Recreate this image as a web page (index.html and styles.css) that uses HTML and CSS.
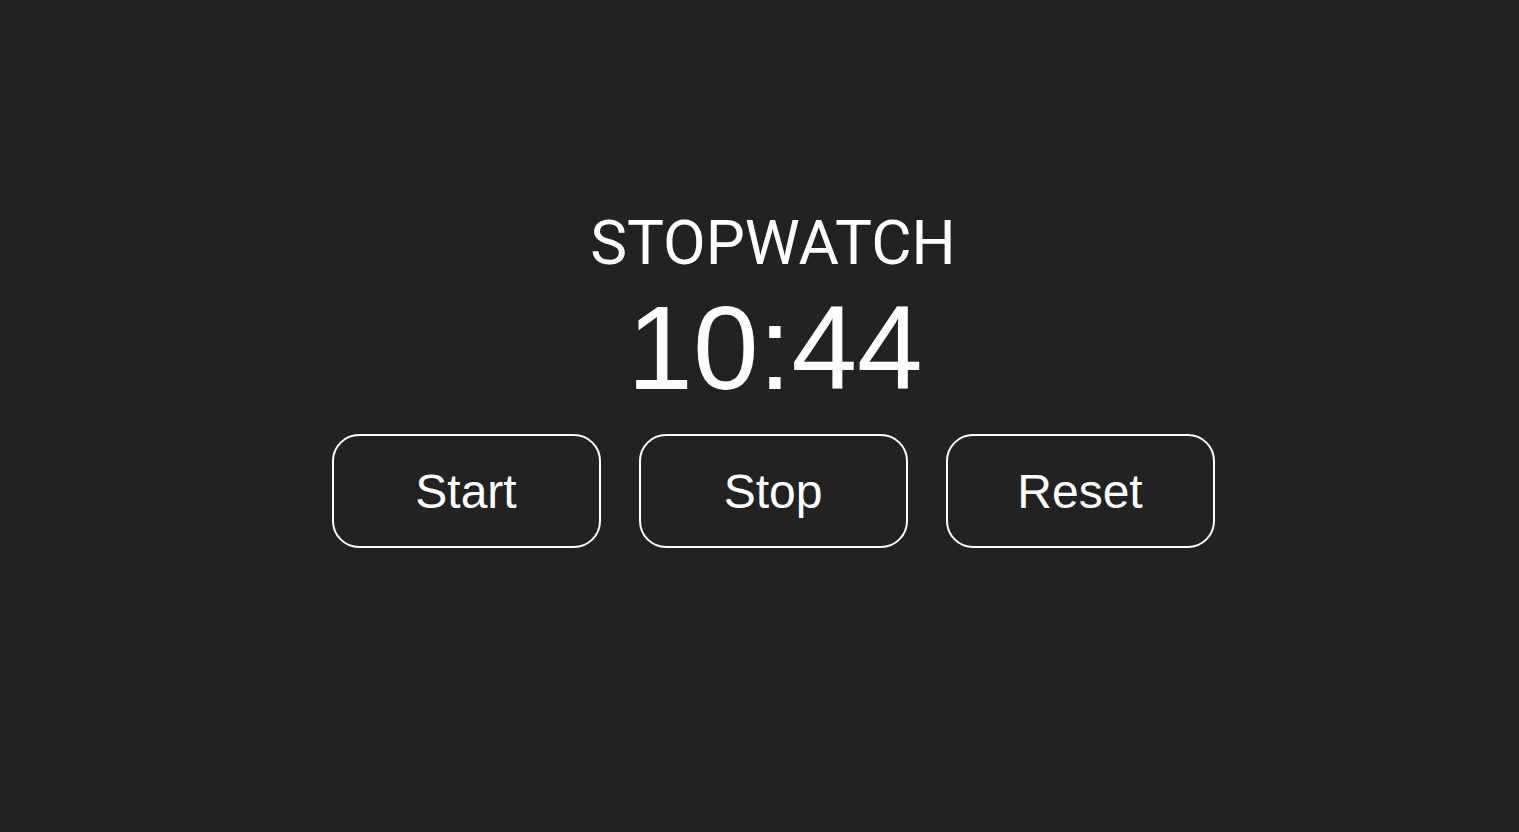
FILE: index.html
```html
<!DOCTYPE html>
<html lang="en">
<head>
<meta charset="utf-8">
<title>Stopwatch</title>
<link rel="stylesheet" href="styles.css">
</head>
<body>
<main class="stopwatch">
  <h1 class="title">STOPWATCH</h1>
  <div class="time">10:44</div>
  <div class="controls">
    <button class="btn">Start</button>
    <button class="btn">Stop</button>
    <button class="btn">Reset</button>
  </div>
</main>
</body>
</html>
```
FILE: styles.css
```css
html, body {
  margin: 0;
  padding: 0;
  height: 100%;
}
body {
  background: #222222;
  color: #ffffff;
  font-family: "Liberation Sans", Arial, sans-serif;
}
.stopwatch {
  box-sizing: border-box;
  height: 100vh;
  padding-top: 206px;
  padding-left: 27px;
  display: flex;
  flex-direction: column;
  align-items: center;
}
.title {
  margin: 0;
  font-family: Roboto, "Liberation Sans", sans-serif;
  font-weight: 400;
  font-size: 62px;
  line-height: 74px;
}
.time {
  margin-top: 9px;
  font-size: 118px;
  line-height: 118px;
  padding-left: 4px;
}
.controls {
  display: flex;
  gap: 38px;
  margin-top: 27px;
}
.btn {
  width: 269px;
  height: 114px;
  padding: 0;
  background: transparent;
  color: #ffffff;
  border: 2px solid #ffffff;
  border-radius: 27px;
  font-family: "Liberation Sans", Arial, sans-serif;
  font-size: 48px;
  cursor: pointer;
}
```
